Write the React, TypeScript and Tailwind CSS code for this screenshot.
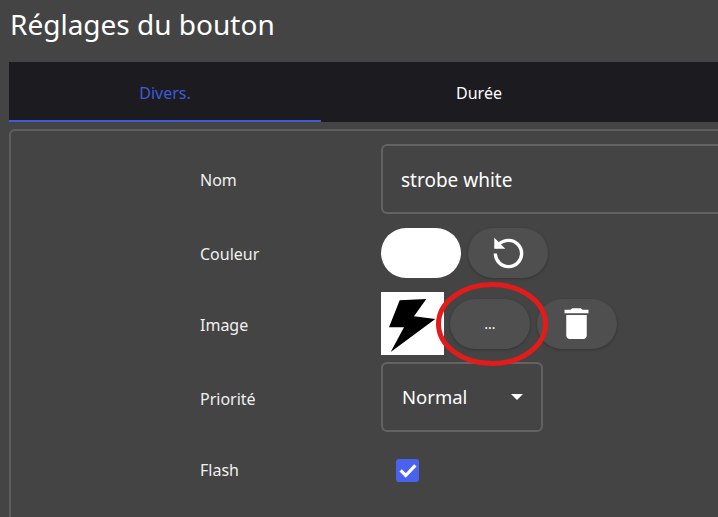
const Pill = ({ children }: { children: React.ReactNode }) => (
	<button
		type="button"
		className="flex h-[50px] w-[80px] shrink-0 items-center justify-center rounded-[25px] bg-[#4f4f4f] text-white shadow-[0_1px_3px_rgba(0,0,0,0.25)]"
	>
		{children}
	</button>
);

const Row = ({
	label,
	className,
	labelClassName,
	children,
}: {
	label: string;
	className: string;
	labelClassName: string;
	children: React.ReactNode;
}) => (
	<div className={`flex items-center ${className}`}>
		<div className="w-[189px] shrink-0" />
		<div className={`w-[181px] shrink-0 text-[16px] text-[#f0f0f0] ${labelClassName}`}>{label}</div>
		{children}
	</div>
);

export default function App() {
	return (
		<div className="relative h-[517px] w-[718px] overflow-hidden bg-[#444444] font-['Noto_Sans','Open_Sans',sans-serif] text-white">
			<h1 className="h-[62px] pl-[10px] pt-[5px] text-[28px] leading-[38px]">
				Réglages du bouton
			</h1>

			<div className="ml-[9px] flex h-[60px] w-[709px] bg-[#1c1b20] pt-[4px] text-[16px]">
				<div className="flex w-[312px] items-center justify-center border-b-2 border-[#3f5bd9] text-[#3f5bd9]">
					Divers.
				</div>
				<div className="flex w-[316px] items-center justify-center pb-[2px] text-white">
					Durée
				</div>
			</div>

			<div className="ml-[9px] mt-[7px] w-[800px] rounded-md border-2 border-[#5f5f5f] pt-[13px]">
				<Row label="Nom" className="" labelClassName="pt-[2px]">
					<div className="flex h-[70px] w-[500px] items-center rounded-md border-2 border-[#636363] px-[18px] pt-[2px] text-[19px]">
						strobe white
					</div>
				</Row>

				<Row label="Couleur" className="mt-[14px]" labelClassName="pt-[2px]">
					<div className="h-[50px] w-[80px] rounded-[25px] bg-white" />
					<div className="ml-[7px]">
						<Pill>
							<svg viewBox="0 0 24 24" className="size-[35px] fill-none stroke-white stroke-[2.3]">
								<path d="M3 12a9 9 0 1 0 9-9 9.75 9.75 0 0 0-6.74 2.74L3 8" />
								<polygon points="3,3 3,8 8,8" className="fill-white stroke-[1.5]" />
							</svg>
						</Pill>
					</div>
				</Row>

				<Row label="Image" className="mt-[14px]" labelClassName="pt-[3px]">
					<div className="size-[63px] bg-white">
						<svg viewBox="0 0 63 63" className="size-[63px]">
							<polygon points="18.7,8.3 45.3,7 33,24.3 54.3,27 9.7,60 23,35.3 8,35.3" fill="#000" />
						</svg>
					</div>
					<div className="ml-[6px] flex gap-[7px]">
						<Pill>
							<span className="text-[14px] leading-none">...</span>
						</Pill>
						<Pill>
							<svg viewBox="0 0 24 24" className="-ml-[2px] size-[41px] fill-white">
								<path d="M6 19c0 1.1.9 2 2 2h8c1.1 0 2-.9 2-2V7H6v12zM19 4h-3.5l-1-1h-5l-1 1H5v2h14V4z" />
							</svg>
						</Pill>
					</div>
				</Row>

				<Row label="Priorité" className="mt-[7px]" labelClassName="pt-[4px]">
					<div className="flex h-[70px] w-[162px] items-center justify-between rounded-md border-2 border-[#636363] pl-[19px] pr-[18px] text-[18.5px]">
						Normal
						<span className="h-0 w-0 border-x-[6px] border-t-[6px] border-x-transparent border-t-white" />
					</div>
				</Row>

				<Row label="Flash" className="mt-[26px] pb-[40px]" labelClassName="">
					<div className="ml-[15px] flex size-[23px] items-center justify-center rounded-[3px] bg-[#4a63ee]">
						<svg viewBox="0 0 24 24" className="size-[22px] fill-none stroke-white stroke-[3.5]">
							<path d="M4 12.5l5.5 5.5L20 7" />
						</svg>
					</div>
				</Row>
			</div>

			{/* red circle drawn over the screenshot */}
			<svg viewBox="0 0 112 84" className="absolute left-[436px] top-[282px] h-[84px] w-[112px] fill-none stroke-[#e31b1b] stroke-[5]">
				<ellipse cx="56" cy="42" rx="53.5" ry="39.5" />
			</svg>
		</div>
	);
}
